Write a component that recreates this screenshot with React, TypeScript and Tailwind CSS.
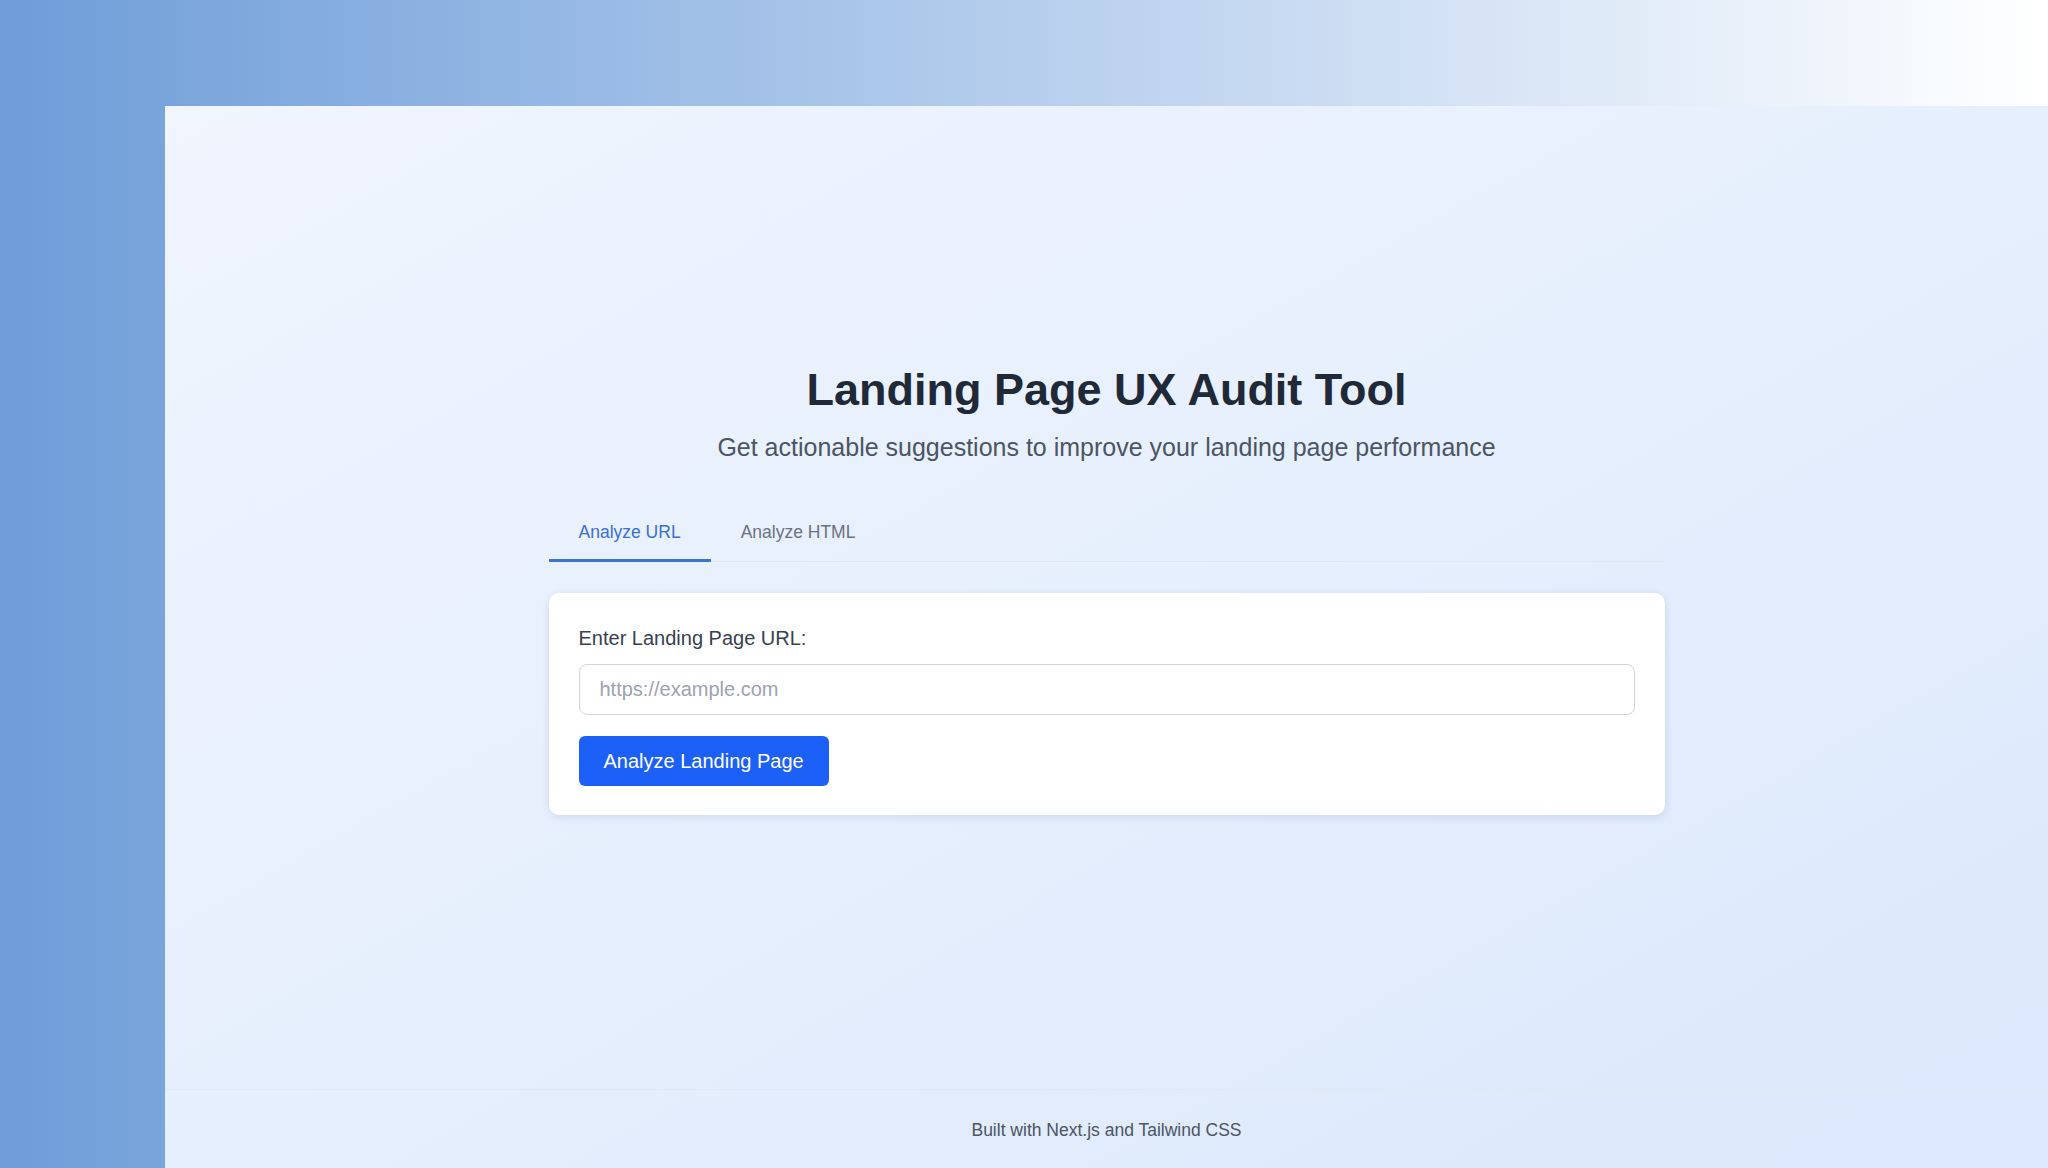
import React from "react";

export default function App() {
  return (
    <div
      className="w-[2048px] h-[1168px] overflow-hidden bg-gradient-to-r from-[#6e9dd8] to-[#ffffff] pl-[165px] pt-[106px]"
      style={{ fontFamily: '"Liberation Sans", Arial, sans-serif' }}
    >
      <div className="w-full h-[1062px] bg-gradient-to-br from-[#f0f5fe] via-[#e6effd] to-[#dbe7fb] flex flex-col">
        <main className="flex-1 flex flex-col items-center justify-center pb-[15px]">
          <div className="w-[1116px] flex flex-col">
            <h1 className="text-center text-[45px] leading-[50px] font-bold text-[#1f2937] mb-[15px]">
              Landing Page UX Audit Tool
            </h1>
            <p className="text-center text-[25px] leading-[35px] text-[#4b5563] mb-[40px]">
              Get actionable suggestions to improve your landing page performance
            </p>
            <div className="flex border-b border-[#e2e7ef] mb-[31px]">
              <button className="px-[30px] pt-[15px] pb-[14px] text-[17.5px] leading-[25px] text-[#3a6fd6] border-b-[3px] border-[#3b74d9] -mb-px">
                Analyze URL
              </button>
              <button className="px-[30px] pt-[15px] pb-[14px] text-[17.5px] leading-[25px] text-[#6b7280] border-b-[3px] border-transparent -mb-px">
                Analyze HTML
              </button>
            </div>
            <div className="bg-white rounded-[10px] shadow-[0_2px_8px_rgba(30,60,120,0.12)] pt-[33px] pb-[29px] px-[30px]">
              <label className="block text-[20px] leading-[25px] text-[#374151] mb-[13px]">
                Enter Landing Page URL:
              </label>
              <input
                type="text"
                placeholder="https://example.com"
                className="w-full h-[51px] px-[20px] text-[20px] border border-[#d1d5db] rounded-[8px] placeholder:text-[#9ca3af] outline-none mb-[21px]"
              />
              <button className="h-[50px] px-[25px] bg-[#1c60f7] text-white text-[20px] leading-[30px] rounded-[6px]">
                Analyze Landing Page
              </button>
            </div>
          </div>
        </main>
        <footer className="h-[79px] border-t border-[#e1e8f2] flex justify-center pt-[28px]">
          <span className="text-[17.5px] leading-[25px] text-[#4b5563]">
            Built with Next.js and Tailwind CSS
          </span>
        </footer>
      </div>
    </div>
  );
}
